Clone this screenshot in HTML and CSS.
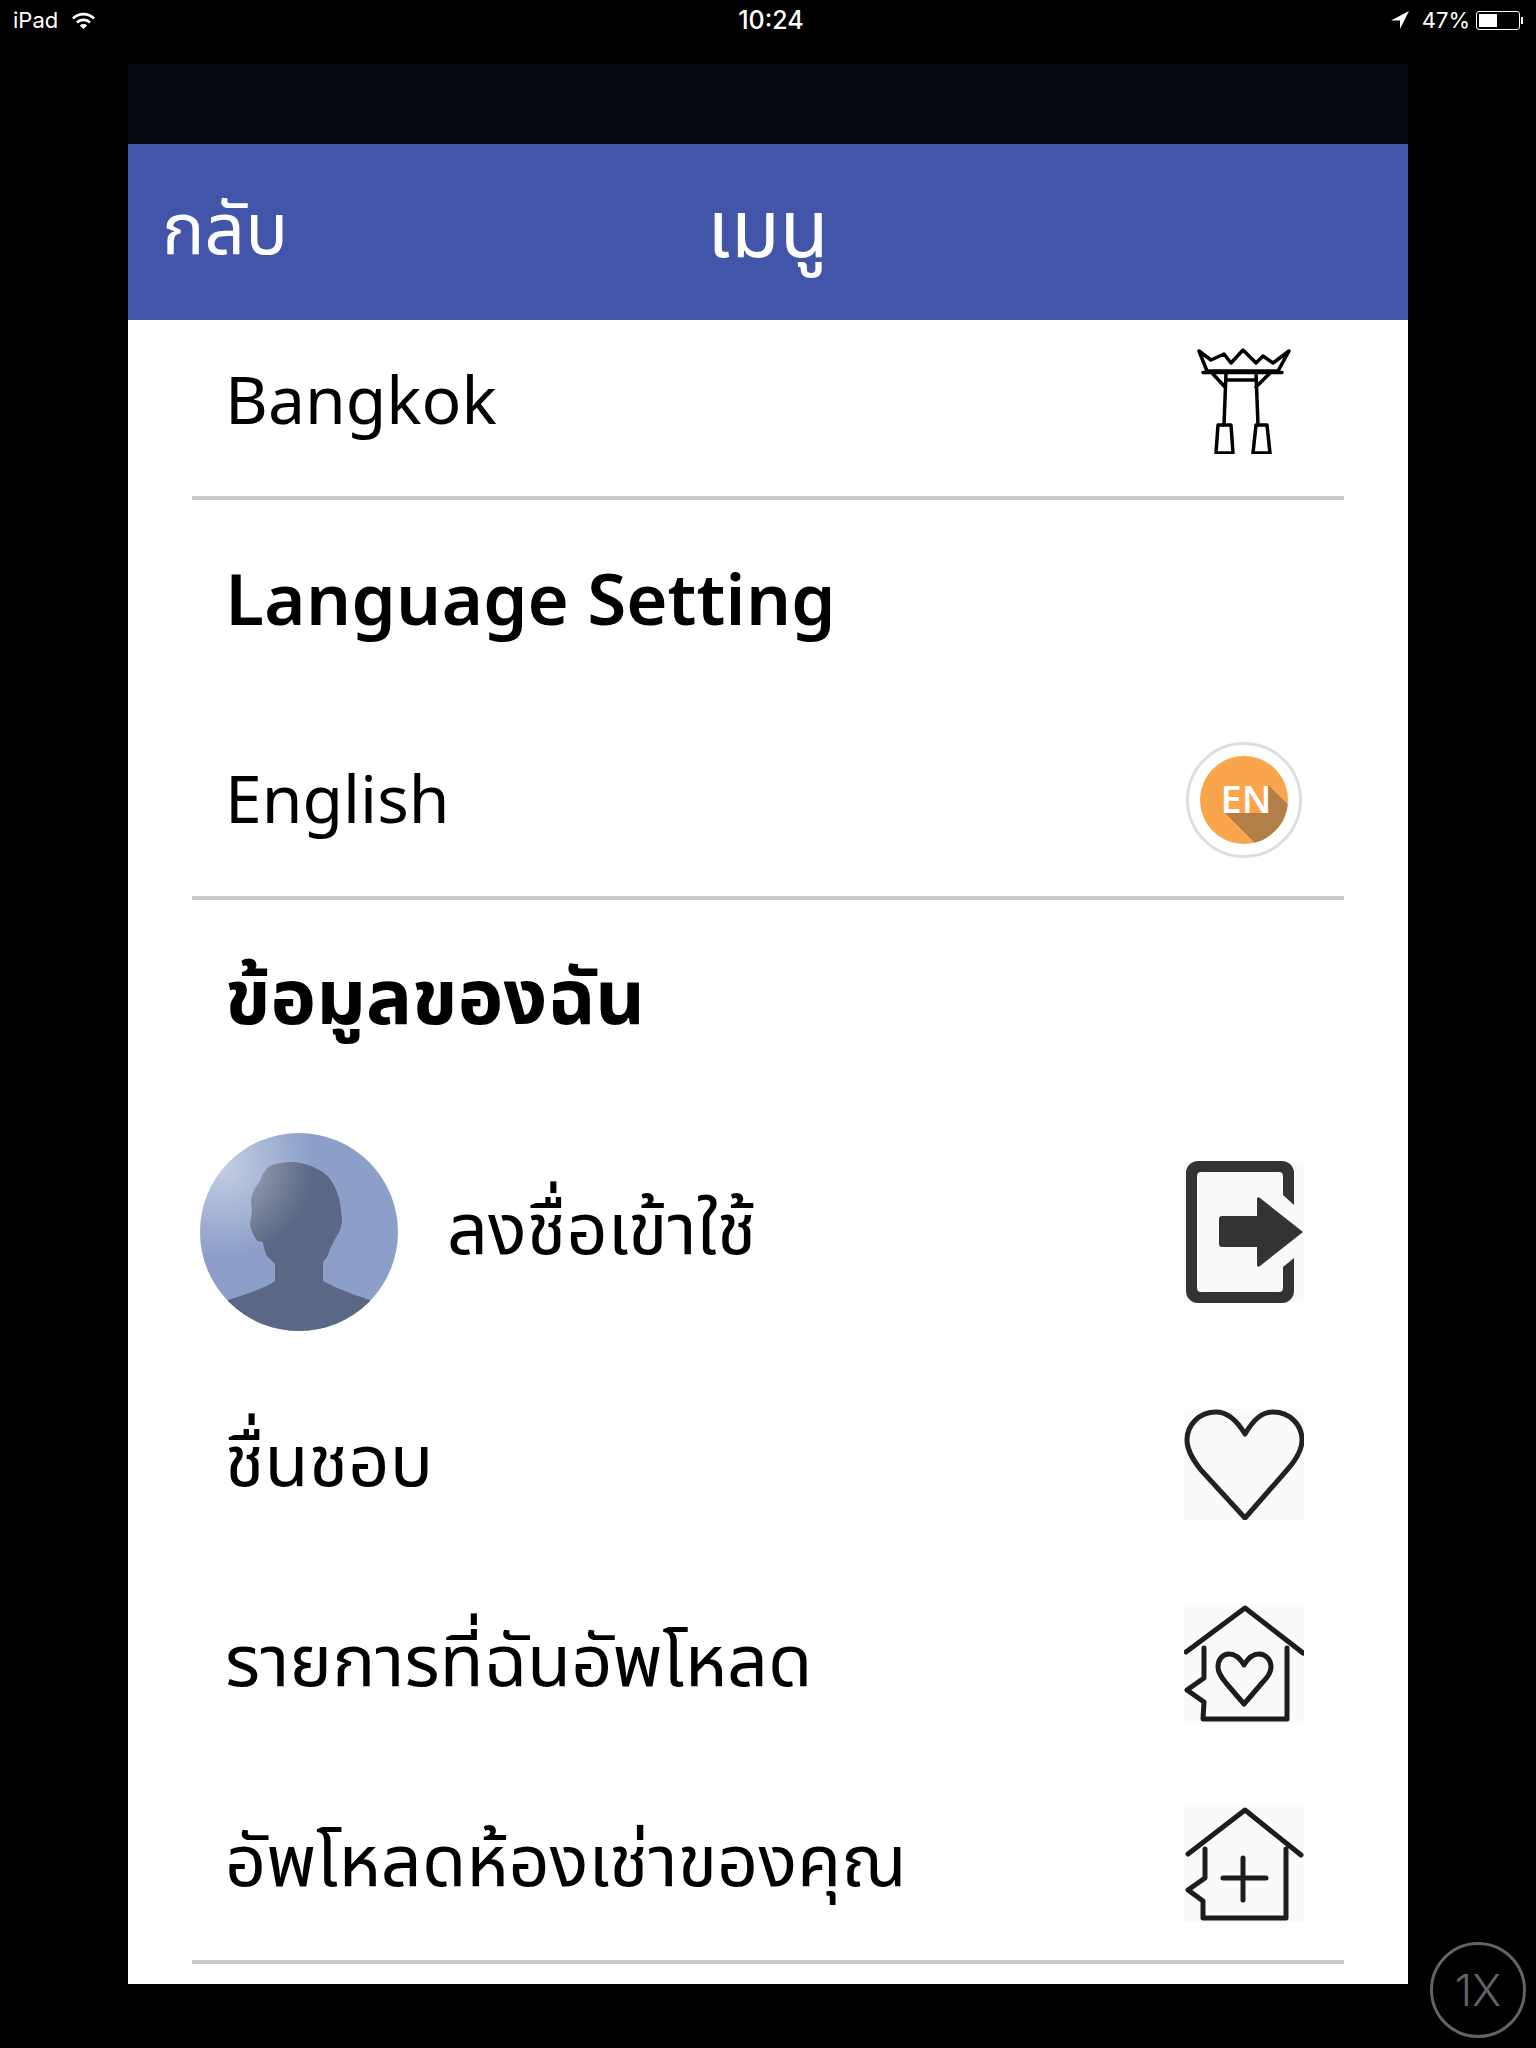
FILE: index.html
```html
<!DOCTYPE html>
<html lang="th">
<head>
    <meta charset="UTF-8">
    <meta name="viewport" content="width=device-width, initial-scale=1.0">
    <title>เมนู</title>
    <link rel="stylesheet" href="styles.css">
</head>
<body>
    <div class="status-bar">
        <div class="status-left">
            <span>iPad</span>
            <svg class="wifi" viewBox="0 0 25 18" width="25" height="18">
                <path d="M1 6.5a16.5 16.5 0 0 1 23 0l-1.8 2a13.8 13.8 0 0 0-19.4 0z" fill="#fff"/>
                <path d="M5 10.6a10.8 10.8 0 0 1 15 0l-1.8 2a8 8 0 0 0-11.4 0z" fill="#fff"/>
                <path d="M8.8 14.4a5.4 5.4 0 0 1 7.4 0l-3.7 3.6z" fill="#fff"/>
            </svg>
        </div>
        <div class="status-time">10:24</div>
        <div class="status-right">
            <svg class="location" viewBox="0 0 18 18" width="18" height="18">
                <path d="M18 0L0 9.5h9V18z" fill="#fff"/>
            </svg>
            <span>47%</span>
            <div class="battery"><div class="battery-level"></div></div>
            <div class="battery-nub"></div>
        </div>
    </div>

    <div class="app">
        <div class="app-top"></div>
        <div class="header">
            <div class="back">กลับ</div>
            <div class="title">เมนู</div>
            <div></div>
        </div>

        <div class="row row-first divided">
            <div class="latin">Bangkok</div>
            <svg class="icon icon-gate" viewBox="0 0 94 106" width="94" height="106" fill="none" stroke="#000" stroke-width="3.5" stroke-linejoin="round" stroke-linecap="round">
                <path d="M2 3L14 12L27 6L34 15L46 2L59 15L66 8L76 15L92 3L81 23H10z"/>
                <path d="M6 24.5H85M15 25L28 39M73 25L59 39M29 25L27 77M59 25L61 77M30 32H59"/>
                <path d="M21 77H34L36 105H19zM59 77H70L73 105H56z"/>
            </svg>
        </div>

        <div class="row heading latin">Language Setting</div>

        <div class="row row-low divided">
            <div class="latin">English</div>
            <svg class="icon icon-lang" viewBox="0 0 116 116" width="116" height="116">
                <defs>
                    <clipPath id="en-clip"><circle cx="58" cy="58" r="44"/></clipPath>
                </defs>
                <circle cx="58" cy="58" r="56.5" fill="#fff" stroke="#dedede" stroke-width="3"/>
                <circle cx="58" cy="58" r="44" fill="#f9a54d"/>
                <path d="M39 71L72 104L110 70L82 43V71z" fill="#b17f47" clip-path="url(#en-clip)"/>
                <text class="en-label" x="60" y="71">EN</text>
            </svg>
        </div>

        <div class="row heading">ข้อมูลของฉัน</div>

        <div class="row row-login">
            <div class="login-info">
                <svg class="avatar" viewBox="0 0 198 198" width="198" height="198">
                    <defs>
                        <radialGradient id="shine" gradientUnits="userSpaceOnUse" cx="22" cy="32" r="92">
                            <stop offset="0" stop-color="#fff" stop-opacity="0.5"/>
                            <stop offset="1" stop-color="#fff" stop-opacity="0"/>
                        </radialGradient>
                    </defs>
                    <rect width="198" height="198" fill="#8b9fc9"/>
                    <path d="M95 29C85 29 76 30 70 33C63 38 62 44 60 48C54 56 51 62 51 69L52 78L50 91C51 98 54 103 57 108L63 109C64 115 65 120 67 123L75 131V148C65 155 45 162 28 167V198H170V167C155 162 135 155 123 148V129C127 125 129 120 130 116L135 106C139 100 142 94 142 86L140 69C138 60 135 54 132 49C128 42 123 39 117 36C110 32 103 30 95 29z" fill="#5a6785"/>
                    <rect width="198" height="198" fill="url(#shine)"/>
                </svg>
                <div>ลงชื่อเข้าใช้</div>
            </div>
            <svg class="icon" viewBox="0 0 120 142" width="120" height="142">
                <rect width="120" height="142" fill="#fafafa"/>
                <path d="M110 44L99 34V15a4 4 0 0 0-4-4H17a4 4 0 0 0-4 4V127a4 4 0 0 0 4 4H95a4 4 0 0 0 4-4V106L110 97V130a12 12 0 0 1-12 12H14a12 12 0 0 1-12-12V12A12 12 0 0 1 14 0H98a12 12 0 0 1 12 12z" fill="#333"/>
                <path d="M38 55H73V38q0-3 3-1L119 71L76 105q-3 2-3-1V86H38q-3 0-3-3V58q0-3 3-3z" fill="#333"/>
            </svg>
        </div>

        <div class="row">
            <div>ชื่นชอบ</div>
            <svg class="icon" viewBox="0 0 120 111" width="120" height="111">
                <rect width="120" height="111" fill="#fafafa"/>
                <path d="M61 25C52 10 43 3 32 3C15 3 3 16 3 31C3 42 10 52 17 61L61 109L103 61C111 52 118 42 118 31C118 16 106 3 89 3C78 3 70 10 61 25z" fill="none" stroke="#222" stroke-width="5" stroke-linejoin="round"/>
            </svg>
        </div>

        <div class="row">
            <div>รายการที่ฉันอัพโหลด</div>
            <svg class="icon" viewBox="0 0 120 120" width="120" height="120">
                <rect width="120" height="120" fill="#fafafa"/>
                <g fill="none" stroke="#1c1c1c" stroke-width="5" stroke-linecap="round" stroke-linejoin="round">
                    <path d="M2 48L61 4L119 49"/>
                    <path d="M20 44V74L3 86L20 98L19 115H103V44"/>
                    <path d="M60 61C56 54 51 50 45 50C38 50 34 56 34 63C34 69 38 74 42 79L60 100L78 79C83 74 87 69 87 63C87 56 82 50 75 50C69 50 64 54 60 61z"/>
                </g>
            </svg>
        </div>

        <div class="row row-low divided">
            <div>อัพโหลดห้องเช่าของคุณ</div>
            <svg class="icon" viewBox="0 0 120 115" width="120" height="115">
                <rect width="120" height="115" fill="#fafafa"/>
                <g fill="none" stroke="#1c1c1c" stroke-width="5" stroke-linecap="round" stroke-linejoin="round">
                    <path d="M4 47L61 3L117 48"/>
                    <path d="M21 42V71L4 83L19 94V111H102V42"/>
                    <path d="M39 71H82M59 51V93"/>
                </g>
            </svg>
        </div>
    </div>

    <div class="zoom-button">1X</div>
</body>
</html>
```

FILE: styles.css
```css
body {
    margin: 0;
    height: 2048px;
    background-color: #000;
    font-family: "Noto Sans Thai", "Noto Sans", "Open Sans", sans-serif;
    overflow: hidden;
}

.status-bar {
    height: 40px;
    margin-bottom: 24px;
    padding: 0 13px;
    display: grid;
    grid-template-columns: 1fr auto 1fr;
    align-items: center;
    color: #fff;
    font-family: Inter, "Liberation Sans", sans-serif;
    font-size: 22px;
}

.status-left {
    display: flex;
    align-items: center;
    gap: 13px;
}

.status-time {
    margin-left: 6px;
    font-size: 25px;
    font-weight: 500;
}

.status-right {
    display: flex;
    align-items: center;
    justify-content: flex-end;
}

.location {
    margin-right: 13px;
}

.battery {
    width: 44px;
    height: 19px;
    margin-left: 6px;
    border: 1px solid #fff;
    border-radius: 3px;
    box-sizing: border-box;
    padding: 2px;
}

.battery-level {
    width: 48%;
    height: 100%;
    background-color: #fff;
}

.battery-nub {
    width: 2px;
    height: 7px;
    margin-left: 1px;
    background-color: #fff;
}

.app {
    width: 1280px;
    height: 1920px;
    margin-left: 128px;
    background-color: #fff;
    color: #000;
}

.app-top {
    height: 80px;
    background-color: #050810;
}

.header {
    height: 176px;
    padding: 0 34px;
    box-sizing: border-box;
    display: grid;
    grid-template-columns: 1fr auto 1fr;
    align-items: center;
    background-color: #4255a9;
    color: #fff;
    font-size: 71px;
}

.title {
    font-size: 80px;
}

.row {
    height: 200px;
    margin: 0 64px;
    padding: 0 33px;
    display: flex;
    align-items: center;
    justify-content: space-between;
    box-sizing: border-box;
    font-size: 72px;
}

.row-first {
    height: 180px;
    padding-bottom: 14px;
}

.row-low {
    padding-top: 4px;
}

.divided {
    border-bottom: 4px solid #c8c8c8;
}

.latin {
    padding-top: 6px;
    font-size: 66px;
}

.heading {
    font-size: 77px;
    font-weight: 700;
}

.heading.latin {
    font-size: 71px;
    font-weight: 600;
}

.row-login {
    height: 264px;
    padding-left: 8px;
}

.login-info {
    display: flex;
    align-items: center;
    gap: 49px;
}

.avatar {
    border-radius: 50%;
}

.icon {
    margin-right: 7px;
    flex-shrink: 0;
}

.icon-gate {
    margin-right: 20px;
}

.icon-lang {
    margin-right: 9px;
}

.en-label {
    font-family: "Open Sans", sans-serif;
    font-size: 38px;
    font-weight: 600;
    fill: #fff;
    text-anchor: middle;
}

.zoom-button {
    position: absolute;
    left: 1430px;
    top: 1942px;
    width: 96px;
    height: 96px;
    border: 3px solid #636366;
    border-radius: 50%;
    box-sizing: border-box;
    display: flex;
    align-items: center;
    justify-content: center;
    color: #636366;
    font-family: Inter, "Liberation Sans", sans-serif;
    font-size: 44px;
    font-weight: 300;
}
```
